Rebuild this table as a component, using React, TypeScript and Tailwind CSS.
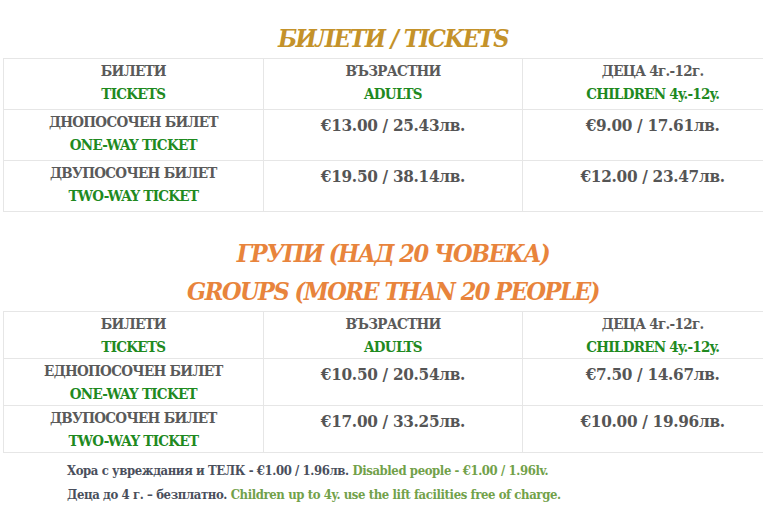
const serif = { fontFamily: '"DejaVu Serif Condensed", "DejaVu Serif", "Liberation Serif", serif' };

type Row = { bg: string; en: string; adults: string; kids: string };

const single: Row[] = [
  { bg: "ДНОПОСОЧЕН БИЛЕТ", en: "ONE-WAY TICKET", adults: "€13.00 / 25.43лв.", kids: "€9.00 / 17.61лв." },
  { bg: "ДВУПОСОЧЕН БИЛЕТ", en: "TWO-WAY TICKET", adults: "€19.50 / 38.14лв.", kids: "€12.00 / 23.47лв." },
];

const groups: Row[] = [
  { bg: "ЕДНОПОСОЧЕН БИЛЕТ", en: "ONE-WAY TICKET", adults: "€10.50 / 20.54лв.", kids: "€7.50 / 14.67лв." },
  { bg: "ДВУПОСОЧЕН БИЛЕТ", en: "TWO-WAY TICKET", adults: "€17.00 / 33.25лв.", kids: "€10.00 / 19.96лв." },
];

function Label({ bg, en }: { bg: string; en: string }) {
  return (
    <div className="flex flex-col items-center font-bold">
      <span className="text-[#5a5a5a]">{bg}</span>
      <span className="text-[#1f8a1f]">{en}</span>
    </div>
  );
}

function PriceTable({ rows, rowH }: { rows: Row[]; rowH: string }) {
  const cell = `border-r border-b border-[#e6e6e6] ${rowH}`;
  const price = `${cell} pt-[4px] text-center text-[17px] font-bold tracking-[-0.3px] text-[#555555]`;
  return (
    <div className="grid grid-cols-3 border-l border-t border-[#e6e6e6] text-[15px] leading-[23px] tracking-[-0.7px]">
      <div className={`${cell} pt-[1px]`}>
        <Label bg="БИЛЕТИ" en="TICKETS" />
      </div>
      <div className={`${cell} pt-[1px]`}>
        <Label bg="ВЪЗРАСТНИ" en="ADULTS" />
      </div>
      <div className={`${cell} pt-[1px]`}>
        <Label bg="ДЕЦА 4г.-12г." en="CHILDREN 4y.-12y." />
      </div>
      {rows.map((r) => (
        <>
          <div key={r.bg + "a"} className={`${cell} pt-[1px]`}>
            <Label bg={r.bg} en={r.en} />
          </div>
          <div key={r.bg + "b"} className={price}>
            {r.adults}
          </div>
          <div key={r.bg + "c"} className={price}>
            {r.kids}
          </div>
        </>
      ))}
    </div>
  );
}

export default function App() {
  return (
    <div className="h-[525px] w-[763px] overflow-hidden bg-white" style={serif}>
      <div className="ml-[3px] w-[780px]">
        <h1 className="pt-[24px] pb-[4px] text-center text-[25px] leading-[30px] font-bold italic tracking-[-1.5px] text-[#c4922a]">
          БИЛЕТИ / TICKETS
        </h1>
        <PriceTable rows={single} rowH="h-[51px]" />
        <div className="pt-[22px] text-center text-[25px] leading-[39px] font-bold italic tracking-[-1.5px] text-[#e8843c]">
          <div>ГРУПИ (НАД 20 ЧОВЕКА)</div>
          <div className="-mt-[1px]">GROUPS (MORE THAN 20 PEOPLE)</div>
        </div>
        <PriceTable rows={groups} rowH="h-[47px]" />
      </div>
      <div className="pl-[67px] pt-[6px] text-[13px] leading-[24px] font-bold tracking-[-0.4px] text-[#4a4f5c]">
        <div>
          Хора с увреждания и ТЕЛК - €1.00 / 1.96лв. <span className="text-[#72a14a]">Disabled people - €1.00 / 1.96lv.</span>
        </div>
        <div>
          Деца до 4 г. – безплатно. <span className="text-[#72a14a]">Children up to 4y. use the lift facilities free of charge.</span>
        </div>
      </div>
    </div>
  );
}
